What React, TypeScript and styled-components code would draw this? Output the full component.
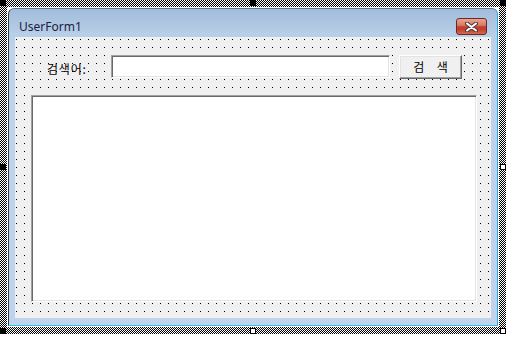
import React from "react";
import styled, { createGlobalStyle } from "styled-components";

const Global = createGlobalStyle`
  html, body { margin: 0; padding: 0; background: #fff; }
  body { font-family: "Noto Sans", "Liberation Sans", sans-serif; }
  #root { width: 509px; height: 337px; }
`;

const Canvas = styled.div`
  position: relative;
  width: 509px;
  height: 337px;
  background: #fff;
  overflow: hidden;
`;

const Selection = styled.div`
  width: 506px;
  height: 334px;
  box-sizing: border-box;
  padding: 7px;
  background: repeating-conic-gradient(#000 0 25%, #fff 0 50%) 0 0 / 2px 2px;
`;

const WhiteGap = styled.div`
  height: 100%;
  box-sizing: border-box;
  padding: 1px;
  background: #fff;
`;

const Window = styled.div`
  height: 100%;
  box-sizing: border-box;
  display: flex;
  flex-direction: column;
  border: 1px solid #5d7590;
  border-left-color: #2e3a48;
  border-right-color: #2aa9d6;
  border-bottom-color: #2cc2e8;
  border-radius: 6px 6px 0 0;
  background: linear-gradient(#a2bcda 0, #b8cfe8 26px, #bdd3eb 40px, #bfd4ec 100%);
  padding: 0 6px 7px 6px;
`;

const TitleBar = styled.div`
  height: 28px;
  box-sizing: border-box;
  display: flex;
  align-items: flex-start;
  justify-content: space-between;
  padding: 9px 4px 0 4px;
`;

const Title = styled.span`
  font-family: "Noto Sans", "Open Sans", sans-serif;
  font-size: 12px;
  line-height: 17px;
  color: #1c1c42;
`;

const CloseButton = styled.div`
  width: 31px;
  height: 17px;
  box-sizing: border-box;
  border: 1px solid #6a2a24;
  border-radius: 3px;
  background: linear-gradient(#e9a393 0%, #d97a64 42%, #c43f2a 52%, #c2402c 70%, #d46a52 100%);
  display: flex;
  align-items: center;
  justify-content: center;
`;

const Client = styled.div`
  flex: 1;
  display: flex;
  flex-direction: column;
  gap: 16px;
  padding: 18px 14px 16px 16px;
  background-color: #f0f0f0;
  background-image: linear-gradient(90deg, #f0f0f0 7px, transparent 0), linear-gradient(#f0f0f0 7px, #000 0);
  background-size: 8px 8px;
  background-position: 2px 3px;
`;

const Row = styled.div`
  display: flex;
  align-items: flex-start;
  padding-left: 16px;
  height: 24px;
`;

const Label = styled.span`
  width: 64px;
  height: 24px;
  padding-top: 2px;
  box-sizing: border-box;
  font-family: "Noto Sans CJK KR", "Noto Sans", sans-serif;
  font-size: 12px;
  line-height: 24px;
  letter-spacing: 0.8px;
  color: #000;
`;

const TextBox = styled.div`
  width: 279px;
  height: 23px;
  box-sizing: border-box;
  background: #fff;
  border-top: 1px solid #a0a0a0;
  border-left: 1px solid #a0a0a0;
  border-right: 1px solid #fff;
  border-bottom: 1px solid #fff;
  box-shadow: inset 1px 1px 0 #696969, inset -1px -1px 0 #e3e3e3;
`;

const Button = styled.div`
  margin-left: 9px;
  width: 63px;
  height: 24px;
  box-sizing: border-box;
  background: #f0f0f0;
  border-top: 1px solid #fff;
  border-left: 1px solid #fff;
  border-right: 1px solid #696969;
  border-bottom: 1px solid #696969;
  box-shadow: inset -1px -1px 0 #a0a0a0, inset 1px 1px 0 #e3e3e3;
  display: flex;
  align-items: center;
  justify-content: center;
  font-family: "Noto Sans CJK KR", "Noto Sans", sans-serif;
  font-size: 12px;
  line-height: 22px;
  white-space: pre;
  word-spacing: 3.5px;
  color: #000;
`;

const ListBox = styled.div`
  flex: 1;
  box-sizing: border-box;
  background: #fff;
  border-top: 1px solid #a0a0a0;
  border-left: 1px solid #a0a0a0;
  border-right: 1px solid #fff;
  border-bottom: 1px solid #fff;
  box-shadow: inset 1px 1px 0 #696969, inset -1px -1px 0 #e3e3e3;
`;

const Handle = styled.div<{ $hollow?: boolean }>`
  position: absolute;
  width: 6px;
  height: 6px;
  box-sizing: border-box;
  background: ${(p) => (p.$hollow ? "#fff" : "#000")};
  border: 1px solid #000;
`;

const handles: { x: number; y: number; hollow?: boolean }[] = [
  { x: 0, y: 0 },
  { x: 250, y: 0 },
  { x: 500, y: 0 },
  { x: 0, y: 164 },
  { x: 500, y: 164, hollow: true },
  { x: 0, y: 328 },
  { x: 250, y: 328, hollow: true },
  { x: 500, y: 328, hollow: true },
];

export default function App() {
  return (
    <>
      <Global />
      <Canvas>
        <Selection>
          <WhiteGap>
            <Window>
              <TitleBar>
                <Title>UserForm1</Title>
                <CloseButton>
                  <svg width="13" height="10" viewBox="0 0 13 10">
                    <path d="M2 1.5 L11 8.5 M11 1.5 L2 8.5" stroke="#4b3a3a" strokeWidth="4" strokeLinecap="round" />
                    <path d="M2 1.5 L11 8.5 M11 1.5 L2 8.5" stroke="#fff" strokeWidth="2" strokeLinecap="round" />
                  </svg>
                </CloseButton>
              </TitleBar>
              <Client>
                <Row>
                  <Label>검색어:</Label>
                  <TextBox />
                  <Button>{"검  색"}</Button>
                </Row>
                <ListBox />
              </Client>
            </Window>
          </WhiteGap>
        </Selection>
        {handles.map((h, i) => (
          <Handle key={i} $hollow={h.hollow} style={{ left: h.x, top: h.y }} />
        ))}
      </Canvas>
    </>
  );
}
